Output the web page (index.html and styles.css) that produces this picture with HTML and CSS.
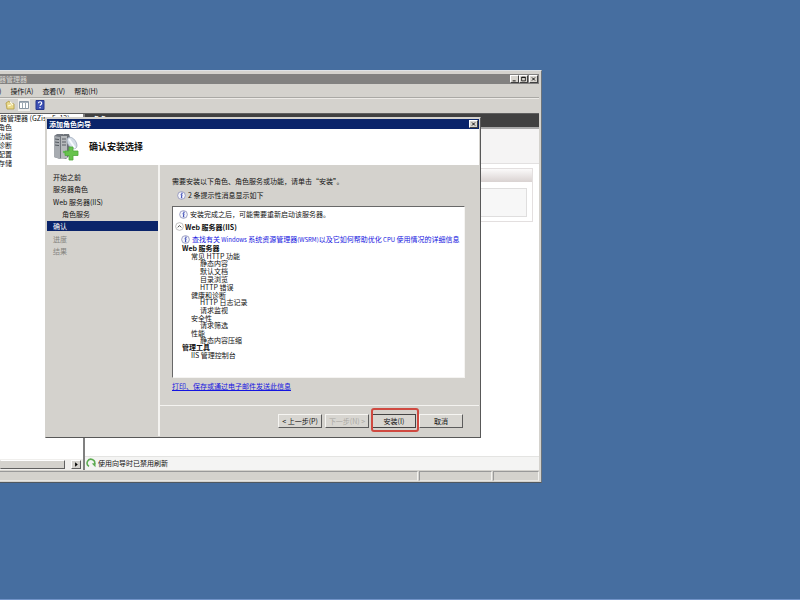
FILE: index.html
```html
<!DOCTYPE html>
<html lang="zh-CN">
<head>
<meta charset="utf-8">
<title>服务器管理器</title>
<link rel="stylesheet" href="styles.css">
</head>
<body>
<svg class="defs" aria-hidden="true">
  <symbol id="info" viewBox="0 0 10 10">
    <circle cx="5" cy="5" r="4.3" fill="#f4f5fb" stroke="#8c90b8" stroke-width=".9"/>
    <path d="M4 4.2h1.6L4.8 7.6h1.1" fill="none" stroke="#2a3bb0" stroke-width="1.1"/>
    <circle cx="5.5" cy="2.5" r=".8" fill="#2a3bb0"/>
  </symbol>
</svg>
<div class="desktop">
  <section class="window manager">
    <header class="titlebar inactive">
      <span class="title">器管理器</span>
      <div class="controls">
        <button class="ctl" aria-label="最小化"><svg viewBox="0 0 9 8"><path d="M2 6.5h4" stroke="#000" stroke-width="1.2"/></svg></button>
        <button class="ctl" aria-label="最大化"><svg viewBox="0 0 9 8"><path d="M2 1.5h5v5H2zM2 2h5" fill="none" stroke="#000"/></svg></button>
        <button class="ctl close" aria-label="关闭"><svg viewBox="0 0 9 8"><path d="M2.5 2l4 4m0-4l-4 4" stroke="#000" stroke-width="1.2"/></svg></button>
      </div>
    </header>
    <nav class="menubar">
      <button>)</button><button>操作(A)</button><button>查看(V)</button><button>帮助(H)</button>
    </nav>
    <div class="toolbar">
      <button aria-label="属性"><svg viewBox="0 0 10 10"><path d="M1 3l3-2 1 2 4 1v5H2z" fill="#ead98a" stroke="#b09a42" stroke-width=".8"/><path d="M5 2l3 3M3 6l3-1" stroke="#fffbe0" stroke-width="1.3"/></svg></button>
      <button class="pressed" aria-label="显示窗格"><svg viewBox="0 0 10 10"><path d="M.5 1.5h9v7h-9z" fill="#fff" stroke="#8b98a4"/><path d="M1 2h8" stroke="#8b98a4" stroke-width="1.5"/><path d="M3.5 3v5M6.5 3v5" stroke="#9aa7b0"/></svg></button>
      <button class="help" aria-label="帮助"><svg viewBox="0 0 10 10"><path d="M1 .5h8v9H1z" fill="#3c50b4" stroke="#27368b"/><path d="M3.5 3.2c0-2 3.2-1.800 3.200 0 0 1.300-1.600 1.200-1.600 2.600M5 7v1.200" fill="none" stroke="#fff" stroke-width="1.200"/></svg></button>
    </div>
    <div class="workspace">
      <aside class="tree">
        <ul>
          <li class="root">器管理器 (GZiss-5c12)</li>
          <li>角色</li><li>功能</li><li>诊断</li><li>配置</li><li>存储</li>
        </ul>
        <div class="scroll">
          <div class="thumb"></div>
          <button class="arrow" aria-label="向右滚动"><svg viewBox="0 0 8 8"><path d="M3 1.500L6 4 3 6.500z"/></svg></button>
        </div>
      </aside>
      <div class="pane">
        <h2>角色</h2>
        <div class="summary"></div>
        <div class="card"><div class="card-head"></div><div class="card-box"></div></div>
        <div class="refresh">
          <svg viewBox="0 0 10 10"><path d="M3 8.300A3.800 3.800 0 1 1 8.600 6" fill="none" stroke="#5cab50" stroke-width="1.500"/><path d="M5.800 5.500L9.500 9.300V5z" fill="#5cab50"/></svg>
          <span>使用向导时已禁用刷新</span>
        </div>
      </div>
    </div>
    <footer class="status"><span></span><span></span><span></span></footer>
  </section>

  <section class="window dialog" role="dialog" aria-labelledby="dialog-title">
    <header class="titlebar">
      <span class="title" id="dialog-title">添加角色向导</span>
      <div class="controls"><button class="ctl" aria-label="关闭"><svg viewBox="0 0 9 8"><path d="M2.500 2l4 4m0-4l-4 4" stroke="#000" stroke-width="1.200"/></svg></button></div>
    </header>
    <div class="banner">
      <svg viewBox="0 0 26 28">
        <path d="M1 3l3-2h6v23l-3 2-6-2z" fill="#737880"/>
        <path d="M1 3l6 1v22l-6-2z" fill="#a7abb0"/>
        <path d="M2 6l4 .6M2 9l4 .6M2 12l4 .6" stroke="#555b62"/>
        <path d="M8 3l3-2h5l1 3v18l-4 4-5-1z" fill="#6d7278"/>
        <path d="M8 3h6v22l-6 1z" fill="#b6b9bc"/>
        <path d="M9 6h4M9 9h4M9 12h4" stroke="#5b6066" stroke-width="1.200"/>
        <circle cx="11" cy="19" r="1.200" fill="#65b95b"/>
        <ellipse cx="19" cy="10" rx="4" ry="6.500" transform="rotate(-35 19 10)" fill="#d5dde8" stroke="#a5b0c0" stroke-width=".8"/>
        <path d="M16 6l6 9" stroke="#f8fbff" stroke-width="2"/>
        <path d="M16 14h4v4h5v4.500h-5V27h-4v-4.500h-4V18h4z" fill="#67c34d" stroke="#4fa83b" stroke-width=".8"/>
      </svg>
      <h1>确认安装选择</h1>
    </div>
    <div class="dialog-body">
      <nav class="steps">
        <ol>
          <li>开始之前</li><li>服务器角色</li><li>Web 服务器(IIS)</li><li class="sub">角色服务</li>
          <li class="current" aria-current="step">确认</li><li class="pending">进度</li><li class="pending">结果</li>
        </ol>
      </nav>
      <div class="main">
        <div class="content">
          <p>需要安装以下角色、角色服务或功能，请单击“安装”。</p>
          <p class="note count"><svg><use href="#info"/></svg>2 条提示性消息显示如下</p>
          <div class="results">
            <p class="note"><svg><use href="#info"/></svg>安装完成之后，可能需要重新启动该服务器。</p>
            <p class="note group-head"><svg viewBox="0 0 10 10"><circle cx="5" cy="5" r="4.300" fill="#fff" stroke="#aaa" stroke-width=".8"/><path d="M3 6l2-2 2 2" fill="none" stroke="#333"/></svg><b>Web 服务器(IIS)</b></p>
            <p class="note tip"><svg><use href="#info"/></svg><a href="#wsrm">查找有关<small> Windows </small>系统资源管理器<small>(WSRM)</small>以及它如何帮助优化<small> CPU </small>使用情况的详细信息</a></p>
            <ul class="features">
              <li><b>Web 服务器</b>
                <ul>
                  <li><span>常见 HTTP 功能</span><ul><li>静态内容</li><li>默认文档</li><li>目录浏览</li><li>HTTP 错误</li></ul></li>
                  <li><span>健康和诊断</span><ul><li>HTTP 日志记录</li><li>请求监视</li></ul></li>
                  <li><span>安全性</span><ul><li>请求筛选</li></ul></li>
                  <li><span>性能</span><ul><li>静态内容压缩</li></ul></li>
                </ul>
              </li>
              <li><b>管理工具</b><ul><li><span>IIS 管理控制台</span></li></ul></li>
            </ul>
          </div>
          <a class="export" href="#export">打印、保存或通过电子邮件发送此信息</a>
        </div>
        <div class="actions">
          <button>&lt; 上一步(P)</button>
          <button disabled>下一步(N) &gt;</button>
          <button class="install">安装(I)</button>
          <button>取消</button>
        </div>
      </div>
    </div>
  </section>
</div>
</body>
</html>
```
FILE: styles.css
```css
* { box-sizing: border-box; margin: 0; padding: 0; }
ul, ol { list-style: none; }
svg { display: block; flex: none; }
.defs { position: absolute; width: 0; height: 0; }
body, button {
  font: 7px/10px "Noto Sans CJK SC", sans-serif;
  color: #111;
  white-space: nowrap;
}
button { border: 0; background: none; }
a { color: #1414e0; text-decoration: none; }
small { font-size: 6px; }

.desktop {
  position: relative;
  min-height: 100vh;
  overflow: hidden;
  background: #466ea0;
  border-bottom: 1px solid #7294c8;
}
.window { position: absolute; display: flex; flex-direction: column; background: #d4d2cd; }
.manager {
  inset: 70px 258px 116px 0;
  padding: 3px 2px 1px 0;
  border-top: 1px solid #dfe3e6;
  border-right: 1px solid #6c747c;
  border-bottom: 1px solid #505860;
}

/* Title bars */
.titlebar {
  display: flex;
  align-items: center;
  justify-content: space-between;
  height: 10px;
  flex: none;
  background: #0a246a;
  color: #fff;
}
.titlebar.inactive { background: #828180; color: #d8d6d2; }
.manager .title { margin-left: -1px; }
.dialog .title { margin-left: 2px; font-weight: bold; }
.controls { display: flex; padding-right: 1px; }
.ctl {
  width: 9px;
  height: 8px;
  background: #d8d5cf;
  border: 1px solid;
  border-color: #fff #404040 #404040 #fff;
}
.ctl svg { width: 100%; height: 100%; }
.ctl.close { margin-left: 1px; }

/* Menu and toolbar */
.menubar { display: flex; gap: 9px; height: 14px; align-items: center; border-bottom: 1px solid #aaa9a5; }
.menubar button:first-child { margin-left: -1px; }
.toolbar { display: flex; gap: 2px; height: 15px; align-items: center; padding: 0 4px 3px; border-top: 1px solid #eceae6; }
.toolbar button { padding: 1px; }
.toolbar svg { width: 10px; height: 10px; }
.toolbar .pressed { background: #efeeeb; }
.toolbar .help { margin-left: 2px; }

/* Workspace */
.workspace { display: flex; flex: 1; min-height: 0; border-top: 1px solid #606060; }
.tree { display: flex; flex-direction: column; justify-content: space-between; width: 85px; background: #fff; border-right: 2px solid #808080; overflow: hidden; }
.tree li { height: 9px; line-height: 9px; margin-left: -2px; }
.tree .root { margin-left: 0; }
.scroll { display: flex; height: 11px; gap: 6px; padding: 1px 2px 1px 0; background: #f0efed; }
.thumb { flex: 1; background: #d4d2cd; border: 1px solid; border-color: #fff #606060 #606060 #d4d2cd; }
.arrow { width: 10px; background: #d4d2cd; border: 1px solid; border-color: #fff #606060 #606060 #fff; }
.arrow svg { width: 100%; height: 100%; }
.pane { display: flex; flex-direction: column; flex: 1; background: #fff; }
.pane h2 { height: 13px; padding-left: 8px; background: #414141; color: #fff; font-size: 7px; line-height: 11px; }
.summary { height: 37px; background: #f5f4f4; border-top: 2px solid #aaa; border-bottom: 1px solid #e2e0e0; }
.card { margin: 4px 6px 0; border: 1px solid #e3dfdf; }
.card-head { height: 13px; background: linear-gradient(#fbfafa, #d9d2d1); }
.card-box { height: 29px; margin: 6px 5px 4px; background: #f7f7f7; border: 1px solid #dfdede; }
.refresh { display: flex; align-items: center; gap: 2px; margin-top: auto; height: 14px; padding: 0 1px 1px; background: #f4f4f3; border-top: 1px solid #e4e4e2; }
.refresh svg { width: 10px; height: 10px; }
.status { display: flex; gap: 1px; height: 10px; margin-top: 1px; }
.status span { flex: none; width: 46px; border: 1px solid; border-color: #999 #f4f3f0 #e8e6e2 #999; }
.status span:first-child { flex: 1; border-left: 0; }
.status span:nth-child(2) { width: 73px; }

/* Wizard dialog */
.dialog {
  inset: 117px 319px 161px 45px;
  padding: 1px;
  border: 1px solid;
  border-color: #d4d2cd #585858 #585858 #d4d2cd;
}
.banner { display: flex; align-items: center; gap: 10px; height: 36px; flex: none; padding-left: 6px; background: #fff; }
.banner svg { width: 26px; height: 28px; }
h1 { font-size: 9px; line-height: 12px; }
.dialog-body { display: flex; flex: 1; min-height: 0; }
.steps { width: 113px; padding-top: 6px; border-right: 2px solid #f4f3f0; }
.steps ol { display: grid; grid-auto-rows: 1fr; height: 86px; align-items: center; }
.steps li { padding-left: 6px; }
.steps .sub { padding-left: 15px; }
.steps .current { background: #0a246a; color: #fff; }
.steps .pending { color: #85847f; }
.main { display: flex; flex-direction: column; flex: 1; min-width: 0; }
.content { flex: 1; padding: 11px 14px 0 12px; }
.note { display: flex; align-items: center; gap: 2px; }
.note svg { width: 9px; height: 9px; }
.count { margin-top: 4px; padding-left: 5px; }
.results { height: 172px; margin: 6px 0 3px; padding-top: 1px; background: #fff; border: 1px solid; border-color: #686868 #f5f4f2 #f5f4f2 #686868; }
.results .note { height: 12px; padding-left: 6px; }
.results .group-head { padding-left: 2px; gap: 1px; height: 13px; }
.results .tip { padding-left: 8px; }
.features { padding-left: 9px; }
.features b, .features span { display: block; line-height: 7px; }
.features ul { padding-left: 9px; }
.features ul span { line-height: 6px; margin-top: 1px; }
.features ul ul li { line-height: 8px; }
.export { display: inline-block; text-decoration: underline; }

/* Wizard buttons */
.actions { display: flex; justify-content: flex-end; gap: 3px; height: 31px; padding: 8px 16px 0 0; border-top: 1px solid #f4f3f0; }
.actions button {
  position: relative;
  width: 44px;
  height: 14px;
  background: #d8d6d1;
  border: 1px solid;
  border-color: #f6f5f2 #5c5c5c #5c5c5c #f6f5f2;
}
.actions button:disabled { color: #aaa8a3; }
.actions .install { border-color: #444; }
.install::after { content: ""; position: absolute; inset: -7px -4px -5px -2px; border: 2px solid #cf4940; border-radius: 3px; }
```
